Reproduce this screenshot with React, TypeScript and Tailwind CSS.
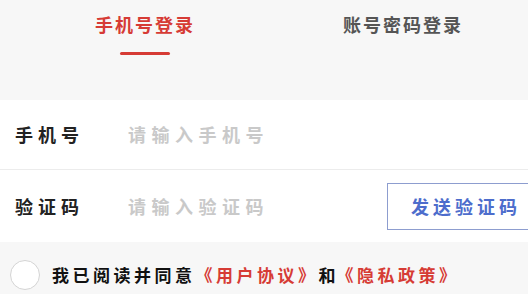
import React from "react";

export default function App() {
  return (
    <div
      className="w-[528px] h-[294px] overflow-hidden bg-[#f7f7f7] flex flex-col"
      style={{ fontFamily: '"Noto Sans CJK SC", "Noto Sans", sans-serif' }}
    >
      {/* tabs */}
      <div className="h-[100px] flex items-start pl-[95px] gap-[148px] pt-[12px]">
        <div className="flex flex-col items-center">
          <span className="text-[18px] leading-[24px] font-bold tracking-[2px] text-[#d63b35]">
            手机号登录
          </span>
          <div className="mt-[16px] w-[50px] h-[3px] rounded-full bg-[#d63b35]" />
        </div>
        <span className="text-[18px] leading-[24px] font-bold tracking-[2px] text-[#555555]">
          账号密码登录
        </span>
      </div>

      {/* form */}
      <div className="bg-white flex flex-col">
        <div className="h-[70px] flex items-center pl-[15px] border-b border-[#ececec]">
          <span className="w-[113px] shrink-0 text-[18px] font-bold tracking-[5px] text-[#222222]">
            手机号
          </span>
          <span className="text-[18px] font-bold tracking-[5.5px] text-[#c9c9c9]">
            请输入手机号
          </span>
        </div>
        <div className="h-[72px] flex items-center pl-[15px]">
          <span className="w-[113px] shrink-0 text-[18px] font-bold tracking-[5px] text-[#222222]">
            验证码
          </span>
          <span className="flex-1 text-[18px] font-bold tracking-[5.5px] text-[#c9c9c9]">
            请输入验证码
          </span>
          <div className="w-[141px] h-[47px] shrink-0 border-y border-l border-[#8d9dcf] flex items-center pl-[23px] mt-[1px]">
            <span className="text-[18px] font-bold tracking-[4px] text-[#4d6dcc] whitespace-nowrap">
              发送验证码
            </span>
          </div>
        </div>
      </div>

      {/* agreement */}
      <div className="flex-1 flex items-center pl-[10px] pt-[13px]">
        <div className="w-[30px] h-[30px] rounded-full border-[1.5px] border-[#d4d4d4] bg-white shrink-0" />
        <div className="ml-[12px] flex items-center text-[17px] font-bold whitespace-nowrap">
          <span className="tracking-[3.5px] text-[#111111]">我已阅读并同意</span>
          <span className="tracking-[3.5px] text-[#d63b35]">《用户协议》</span>
          <span className="tracking-[1px] text-[#111111]">和</span>
          <span className="tracking-[3.5px] text-[#d63b35]">《隐私政策》</span>
        </div>
      </div>
    </div>
  );
}
